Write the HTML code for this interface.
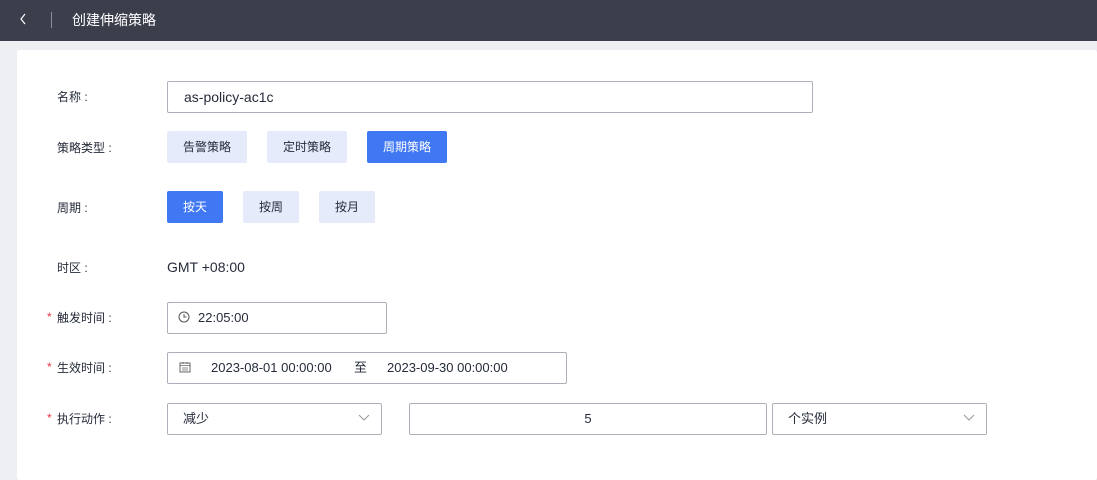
<!DOCTYPE html>
<html><head><meta charset="utf-8">
<style>
*{box-sizing:border-box;margin:0;padding:0}
body{width:1097px;height:480px;overflow:hidden;background:#eeeff3;font-family:"Liberation Sans","Noto Sans CJK SC",sans-serif;color:#252b3a;position:relative}
.hd{position:absolute;left:0;top:0;width:1097px;height:41px;background:#3b3f4c;color:#fff}
.hd .back{position:absolute;left:19px;top:13px}
.hd .sep{position:absolute;left:51px;top:12px;width:1px;height:16px;background:#8a8e98}
.hd .t{position:absolute;left:72px;top:11px;font-size:14px;line-height:18px}
.card{position:absolute;left:17px;top:50px;width:1080px;height:430px;background:#fff;border-radius:3px}
.lab{position:absolute;left:57px;font-size:12px;line-height:16px;color:#252b3a}
.req{position:absolute;left:47px;color:#e8354b;font-size:12px}
.box{position:absolute;border:1px solid #adb0b8;border-radius:2px;background:#fff;font-size:13px;line-height:30px;color:#252b3a}
.btn{position:absolute;height:32px;line-height:32px;text-align:center;font-size:12px;border-radius:2px;background:#e5ebfa;color:#252b3a}
.btn.on{background:#4077f2;color:#fff}
</style></head><body>
<div class="hd">
<svg class="back" width="8" height="12" viewBox="0 0 8 12"><path d="M6 1L2 6l4 5" stroke="#fff" stroke-width="1.2" fill="none"/></svg>
<div class="sep"></div>
<div class="t">创建伸缩策略</div>
</div>
<div class="card"></div>

<div class="lab" style="top:89px">名称 :</div>
<div class="box" style="left:167px;top:81px;width:646px;height:32px;padding-left:16px;font-size:14px">as-policy-ac1c</div>

<div class="lab" style="top:140px">策略类型 :</div>
<div class="btn" style="left:167px;top:131px;width:80px">告警策略</div>
<div class="btn" style="left:267px;top:131px;width:80px">定时策略</div>
<div class="btn on" style="left:367px;top:131px;width:80px">周期策略</div>

<div class="lab" style="top:200px">周期 :</div>
<div class="btn on" style="left:167px;top:191px;width:56px">按天</div>
<div class="btn" style="left:243px;top:191px;width:56px">按周</div>
<div class="btn" style="left:319px;top:191px;width:56px">按月</div>

<div class="lab" style="top:260px">时区 :</div>
<div style="position:absolute;left:167px;top:258px;font-size:14px;line-height:18px">GMT +08:00</div>

<div class="req" style="top:310px">*</div>
<div class="lab" style="top:310px">触发时间 :</div>
<div class="box" style="left:167px;top:302px;width:220px;height:32px;padding-left:30px">22:05:00</div>
<svg style="position:absolute;left:178px;top:311px" width="12" height="12" viewBox="0 0 12 12"><circle cx="6" cy="6" r="5" stroke="#555" fill="none"/><path d="M6 3v3h2.5" stroke="#555" fill="none"/></svg>

<div class="req" style="top:360px">*</div>
<div class="lab" style="top:360px">生效时间 :</div>
<div class="box" style="left:167px;top:352px;width:400px;height:32px;font-size:13px">
<span style="position:absolute;left:43px">2023-08-01 00:00:00</span>
<span style="position:absolute;left:186px">至</span>
<span style="position:absolute;left:219px">2023-09-30 00:00:00</span>
</div>
<svg style="position:absolute;left:179px;top:361px" width="12" height="12" viewBox="0 0 12 12"><rect x="1" y="2" width="10" height="9" stroke="#666" fill="none"/><path d="M1 4.5h10M4 1v2M8 1v2M3 7h6M3 9h6" stroke="#666" stroke-width=".8"/></svg>

<div class="req" style="top:411px">*</div>
<div class="lab" style="top:411px">执行动作 :</div>
<div class="box" style="left:167px;top:403px;width:215px;height:32px;padding-left:15px">减少</div>
<svg style="position:absolute;left:358px;top:414px" width="12" height="8" viewBox="0 0 12 8"><path d="M1 1l5 5 5-5" stroke="#999" fill="none"/></svg>
<div class="box" style="left:409px;top:403px;width:358px;height:32px;text-align:center;font-size:13px">5</div>
<div class="box" style="left:772px;top:403px;width:215px;height:32px;padding-left:15px">个实例</div>
<svg style="position:absolute;left:963px;top:414px" width="12" height="8" viewBox="0 0 12 8"><path d="M1 1l5 5 5-5" stroke="#999" fill="none"/></svg>
</body></html>
